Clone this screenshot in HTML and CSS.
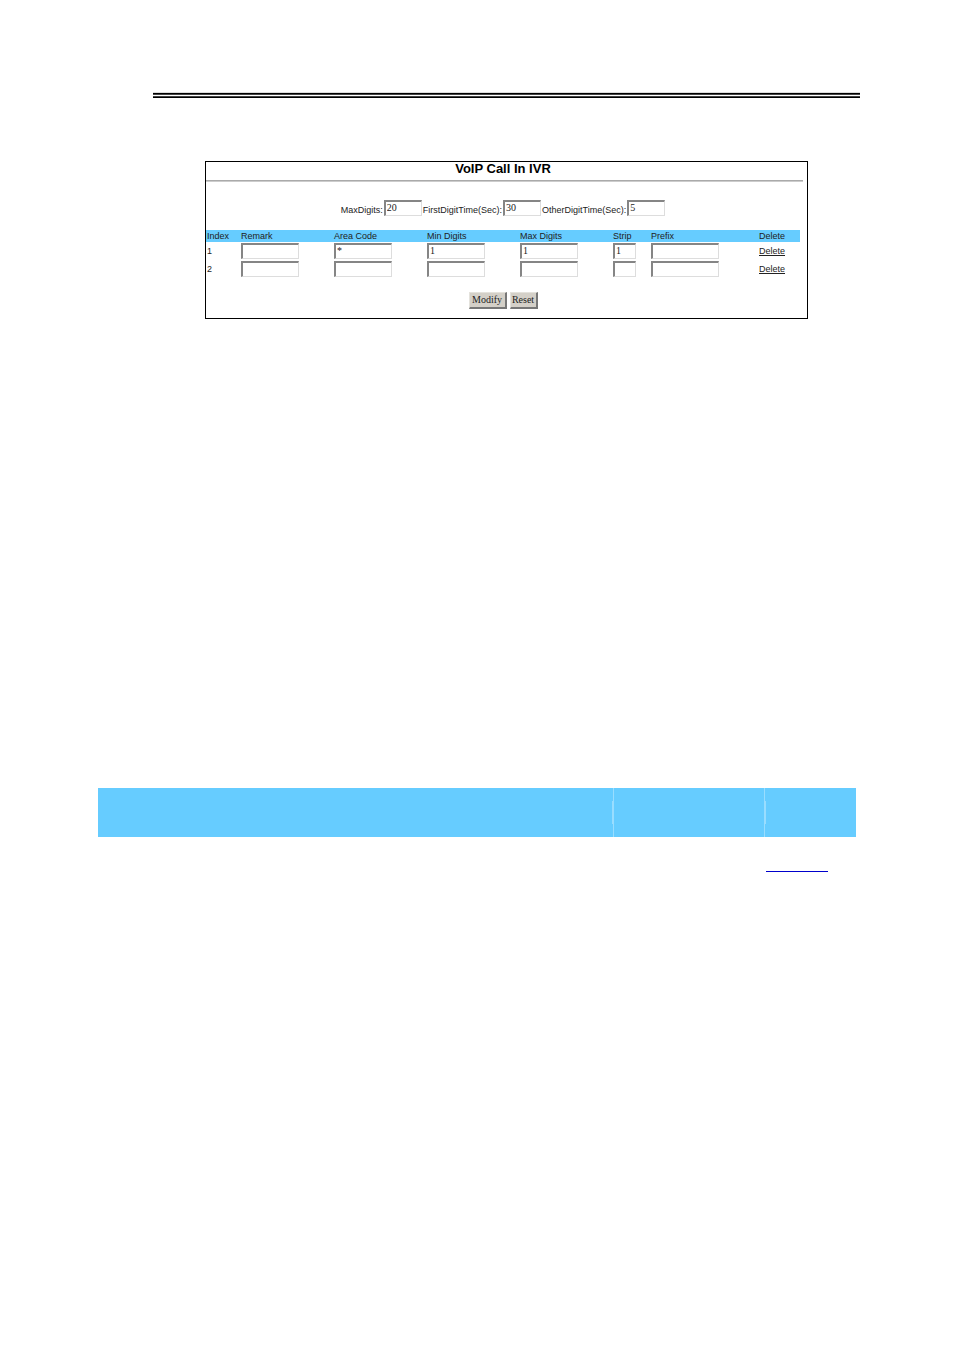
FILE: index.html
```html
<!DOCTYPE html>
<html lang="en">
<head>
<meta charset="utf-8">
<title>VoIP Call In IVR</title>
<link rel="stylesheet" href="styles.css">
</head>
<body>
<header class="page-rule"></header>
<main>
<form class="panel">
  <h1 class="panel-title">VoIP Call In IVR</h1>
  <hr class="panel-line">
  <div class="limits">
    <label for="max">MaxDigits:</label><input id="max" class="field" value="20">
    <label for="first">FirstDigitTime(Sec):</label><input id="first" class="field" value="30">
    <label for="other">OtherDigitTime(Sec):</label><input id="other" class="field" value="5">
  </div>
  <table class="rules">
    <colgroup><col class="c-index"><col class="c-wide"><col class="c-wide"><col class="c-wide"><col class="c-wide"><col class="c-strip"><col class="c-prefix"><col></colgroup>
    <thead>
      <tr><th>Index</th><th>Remark</th><th>Area Code</th><th>Min Digits</th><th>Max Digits</th><th>Strip</th><th>Prefix</th><th>Delete</th></tr>
    </thead>
    <tbody>
      <tr>
        <td>1</td>
        <td><input class="field medium" aria-label="Remark 1"></td>
        <td><input class="field medium" aria-label="Area Code 1" value="*"></td>
        <td><input class="field medium" aria-label="Min Digits 1" value="1"></td>
        <td><input class="field medium" aria-label="Max Digits 1" value="1"></td>
        <td><input class="field small" aria-label="Strip 1" value="1"></td>
        <td><input class="field large" aria-label="Prefix 1"></td>
        <td><a href="#">Delete</a></td>
      </tr>
      <tr>
        <td>2</td>
        <td><input class="field medium" aria-label="Remark 2"></td>
        <td><input class="field medium" aria-label="Area Code 2"></td>
        <td><input class="field medium" aria-label="Min Digits 2"></td>
        <td><input class="field medium" aria-label="Max Digits 2"></td>
        <td><input class="field small" aria-label="Strip 2"></td>
        <td><input class="field large" aria-label="Prefix 2"></td>
        <td><a href="#">Delete</a></td>
      </tr>
    </tbody>
  </table>
  <div class="actions">
    <button class="btn" type="submit">Modify</button>
    <button class="btn reset" type="reset">Reset</button>
  </div>
</form>
<section class="listing">
  <div class="band">
    <div class="cell"></div>
    <div class="cell second"></div>
    <div class="cell third"></div>
  </div>
  <div class="link-row"><a class="blank-link" href="#" aria-label="Open"></a></div>
</section>
</main>
</body>
</html>
```
FILE: styles.css
```css
* { box-sizing: border-box; }
body {
  margin: 0;
  padding: 92px 0 0;
  background: #fff;
  color: #222;
  font: 9px/12px "Liberation Sans", Arial, sans-serif;
}
.page-rule {
  height: 6px;
  margin: 0 94px 0 153px;
  background: linear-gradient(#ddd 1px, #000 1px 2px, #444 2px 3px, #fff 3px 4px, #444 4px 5px, #000 5px);
}
.panel {
  margin: 63px 146px 0 205px;
  border: 1px solid #000;
  padding-bottom: 9px;
}
.panel-title {
  margin: 0 7px 0 0;
  color: #000;
  font-size: 13px;
  line-height: 13px;
  text-align: center;
}
.panel-line {
  margin: 5px 4px 0 0;
  border: 0;
  border-top: 1px solid #aaa;
  border-bottom: 1px solid #ccc;
}
.limits {
  display: flex;
  justify-content: center;
  align-items: flex-end;
  gap: 1px;
  margin: 18px 7px 0 0;
}
.field {
  display: block;
  width: 38px;
  height: 16px;
  margin: 0;
  padding: 0 0 2px 1px;
  border: 1px solid #ddd;
  border-top: 2px solid #858585;
  border-left: 2px solid #858585;
  border-radius: 0;
  background: #fff;
  color: #222;
  font: 10px/11px "Liberation Serif", "Times New Roman", serif;
}
.rules {
  width: calc(100% - 7px);
  margin-top: 14px;
  table-layout: fixed;
  border-collapse: collapse;
}
.c-index { width: 35px; }
.c-wide { width: 93px; }
.c-strip { width: 38px; }
.c-prefix { width: 108px; }
.rules th {
  height: 12px;
  padding: 0;
  background: #6cf;
  font-weight: 400;
  line-height: 12px;
  text-align: left;
  white-space: nowrap;
}
.rules td {
  height: 18px;
  padding: 1px 0;
  vertical-align: middle;
}
.rules td:first-child, .rules th:first-child { padding-left: 1px; }
.rules a { color: #222; }
.medium { width: 58px; }
.small { width: 23px; }
.large { width: 68px; }
.actions {
  display: flex;
  justify-content: center;
  gap: 3px;
  margin: 14px 7px 0 0;
}
.btn {
  width: 38px;
  height: 17px;
  padding: 0;
  border: 1px solid #e4e2dc;
  border-right: 2px solid #777;
  border-bottom: 2px solid #777;
  border-radius: 0;
  background: #d4d0c8;
  color: #222;
  font: 10px/12px "Liberation Serif", "Times New Roman", serif;
}
.reset { width: 28px; }
.listing { margin: 469px 98px 0; }
.band {
  display: grid;
  grid-template-columns: 1fr 151px 92px;
  height: 49px;
  background: #6cf;
}
.second, .third {
  position: relative;
  border-left: 1px solid #9df;
}
.second::before, .third::before {
  content: "";
  position: absolute;
  top: 13px;
  left: -2px;
  width: 1px;
  height: 23px;
  background: #9df;
}
.third::before { left: 0; }
.link-row {
  display: flex;
  justify-content: flex-end;
  padding: 14px 28px 0 0;
}
.blank-link {
  width: 62px;
  height: 21px;
  border-bottom: 1px solid #00c;
}
```
